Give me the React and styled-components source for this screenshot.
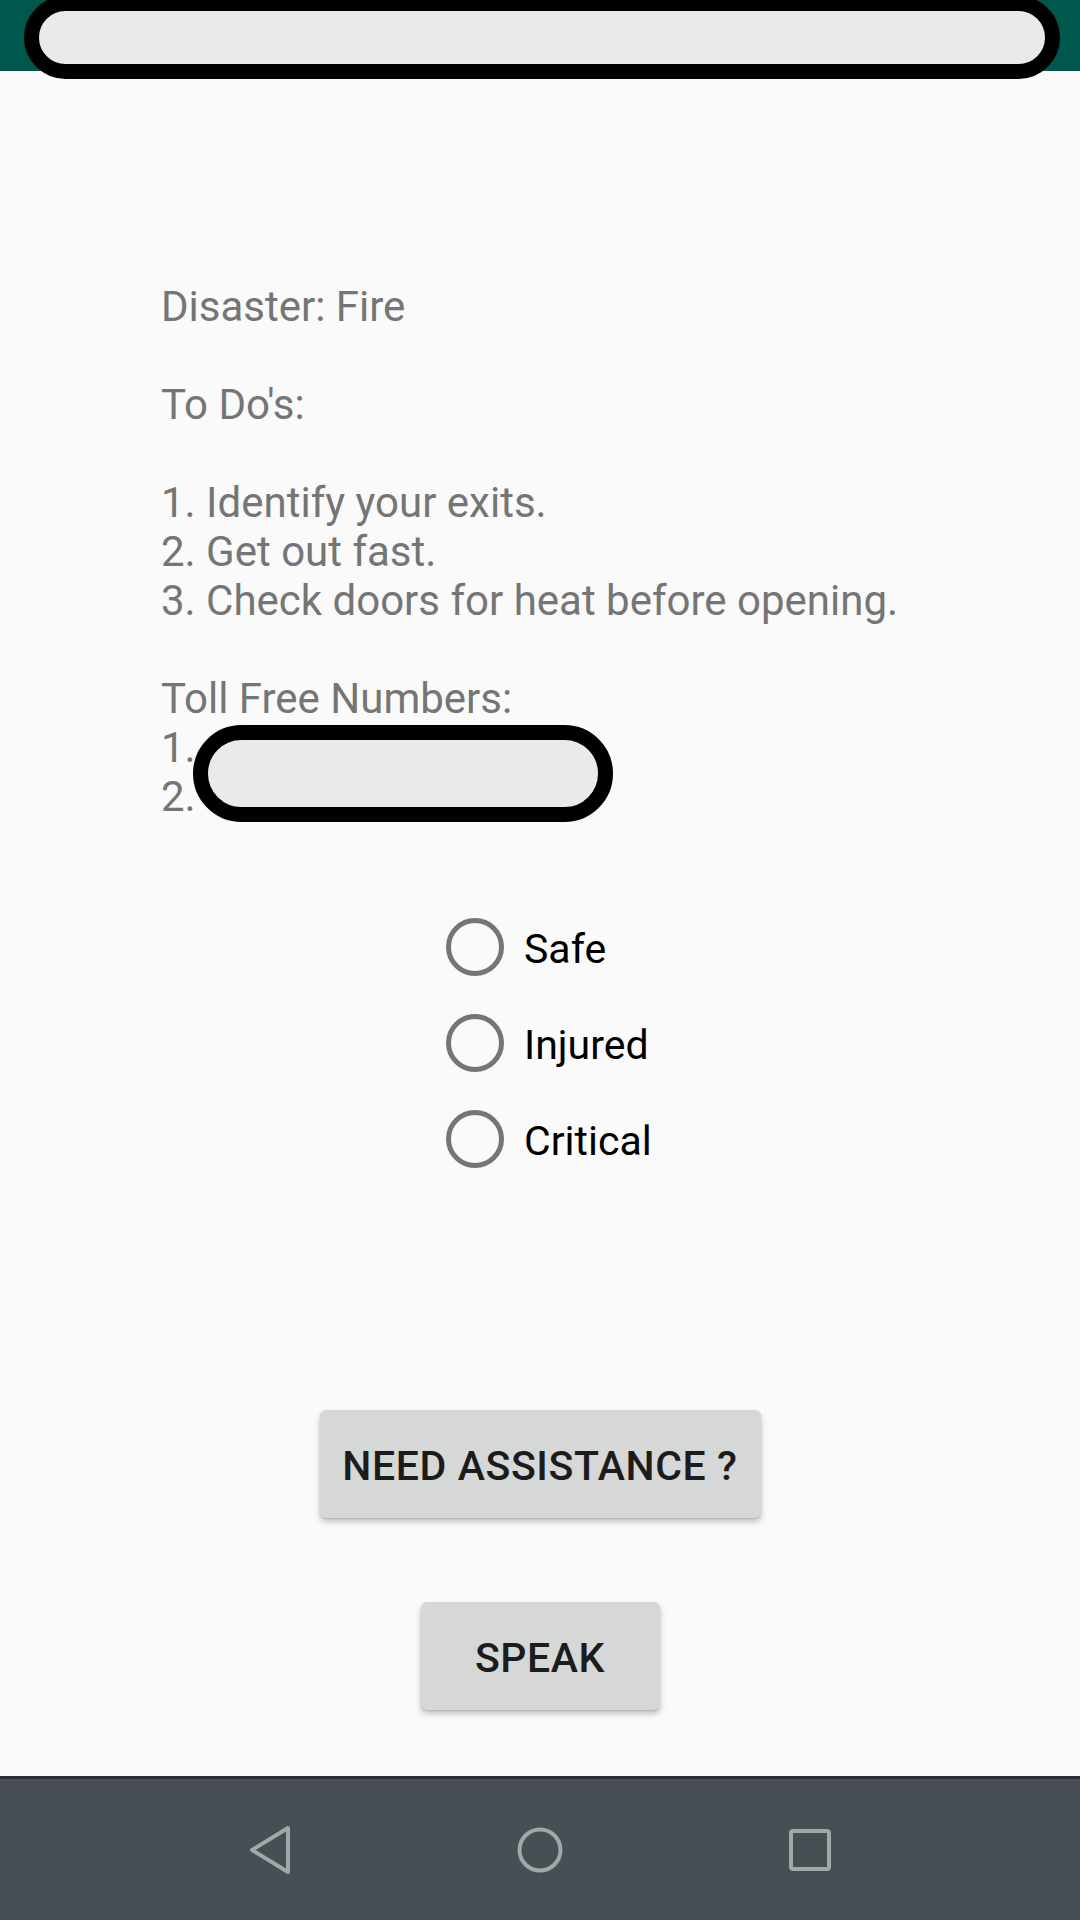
import React from "react";
import styled, { createGlobalStyle } from "styled-components";

const GlobalStyle = createGlobalStyle`
  html, body {
    margin: 0;
    padding: 0;
    background: #fafafa;
  }
  body {
    font-family: Roboto, "Noto Sans", "Liberation Sans", sans-serif;
  }
`;

const Screen = styled.div`
  width: 1080px;
  height: 1920px;
  display: flex;
  flex-direction: column;
  background: #fafafa;
  overflow: hidden;
`;

const StatusBar = styled.div`
  position: relative;
  height: 71px;
  flex-shrink: 0;
  background: #00574b;
`;

// blacked-out bits of the screenshot
const Redaction = styled.div`
  position: absolute;
  box-sizing: border-box;
  left: ${(p) => p.left}px;
  top: ${(p) => p.top}px;
  width: ${(p) => p.width}px;
  height: ${(p) => p.height}px;
  border: 15px solid #000;
  border-radius: ${(p) => p.height / 2}px;
  background: #eaeaea;
  z-index: 2;
`;

const Content = styled.main`
  flex: 1;
  display: flex;
  flex-direction: column;
`;

const InfoText = styled.div`
  position: relative;
  margin: 211px 0 0 161px;
  font-size: 42px;
  line-height: 49px;
  color: #757575;
  white-space: pre;
`;

const Line = styled.div`
  height: 49px;
`;

const RadioGroup = styled.div`
  display: flex;
  flex-direction: column;
  margin: 78px 0 0 446px;
`;

const RadioRow = styled.label`
  display: flex;
  align-items: center;
  height: 96px;
  gap: 20px;
  font-size: 41px;
  color: #000;
`;

const RadioText = styled.span`
  padding-top: 4px;
`;

const ButtonStack = styled.div`
  display: flex;
  flex-direction: column;
  align-items: center;
  gap: 84px;
  margin-top: 223px;
`;

const RaisedButton = styled.button`
  height: 108px;
  width: ${(p) => p.width}px;
  border: none;
  border-radius: 6px;
  background: #d6d7d7;
  color: #1c1c1c;
  font-family: Roboto, "Noto Sans", sans-serif;
  font-size: 41px;
  font-weight: 500;
  letter-spacing: 0.6px;
  padding: 4px 0 0;
  box-shadow: 0 4px 6px rgba(0, 0, 0, 0.22), 0 1px 2px rgba(0, 0, 0, 0.12);
`;

const NavBar = styled.nav`
  height: 141px;
  flex-shrink: 0;
  border-top: 3px solid #2b2f33;
  background: #474e54;
  display: flex;
  justify-content: center;
  align-items: center;
`;

const NavCell = styled.div`
  width: 270px;
  display: flex;
  justify-content: center;
  align-items: center;
`;

const lines = [
  "Disaster: Fire",
  "",
  "To Do's:",
  "",
  "1. Identify your exits.",
  "2. Get out fast.",
  "3. Check doors for heat before opening.",
  "",
  "Toll Free Numbers:",
  "1.",
  "2.",
];

function RadioCircle() {
  return (
    <svg width="58" height="58" viewBox="0 0 58 58">
      <circle cx="29" cy="29" r="26.5" fill="none" stroke="#757575" strokeWidth="5" />
    </svg>
  );
}

export default function App() {
  return (
    <>
      <GlobalStyle />
      <Screen>
        <StatusBar>
          <Redaction left={24} top={-4} width={1036} height={83} />
        </StatusBar>
        <Content>
          <InfoText>
            {lines.map((l, i) => (
              <Line key={i}>{l}</Line>
            ))}
            <Redaction left={32} top={443} width={420} height={97} />
          </InfoText>
          <RadioGroup>
            {["Safe", "Injured", "Critical"].map((s) => (
              <RadioRow key={s}>
                <RadioCircle />
                <RadioText>{s}</RadioText>
              </RadioRow>
            ))}
          </RadioGroup>
          <ButtonStack>
            <RaisedButton width={441}>NEED ASSISTANCE ?</RaisedButton>
            <RaisedButton width={239}>SPEAK</RaisedButton>
          </ButtonStack>
        </Content>
        <NavBar>
          <NavCell>
            <svg width="44" height="50" viewBox="0 0 44 50">
              <path d="M40 3 L4 25 L40 47 Z" fill="none" stroke="#a2a7aa" strokeWidth="4" strokeLinejoin="round" />
            </svg>
          </NavCell>
          <NavCell>
            <svg width="48" height="48" viewBox="0 0 48 48">
              <circle cx="24" cy="24" r="20.5" fill="none" stroke="#a2a7aa" strokeWidth="4" />
            </svg>
          </NavCell>
          <NavCell>
            <svg width="42" height="42" viewBox="0 0 42 42">
              <rect x="2" y="2" width="38" height="38" rx="2" fill="none" stroke="#a2a7aa" strokeWidth="4" />
            </svg>
          </NavCell>
        </NavBar>
      </Screen>
    </>
  );
}
